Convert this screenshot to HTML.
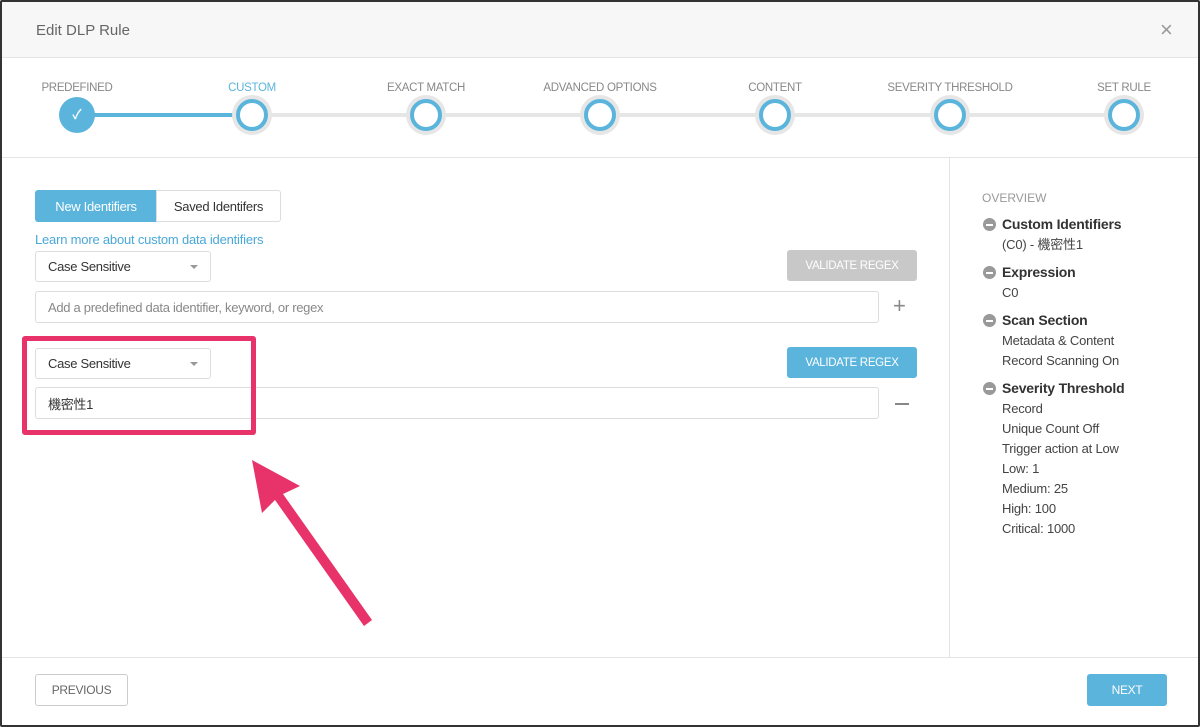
<!DOCTYPE html>
<html><head><meta charset="utf-8"><style>
*{box-sizing:border-box;margin:0;padding:0}
body{width:1200px;height:727px;background:#fff;font-family:"Liberation Sans","Noto Sans CJK JP",sans-serif;position:relative;overflow:hidden;color:#333}
.frame{position:absolute;left:0;top:0;width:1200px;height:727px;border:2px solid #333;border-radius:2px}
.hdr{position:absolute;left:2px;top:2px;width:1196px;height:56px;background:#f7f7f7;border-bottom:1px solid #e4e4e4}
.abs{position:absolute}
.lbl{position:absolute;top:82px;font-size:11.5px;color:#888;transform:translateX(-50%);white-space:nowrap;letter-spacing:-0.3px}
.circ{position:absolute;top:99px;width:32px;height:32px;border-radius:50%;background:#fff;border:4px solid #5ab4dc;box-shadow:0 0 0 4px #e6e6e6;transform:translateX(-50%)}
.inp{position:absolute;border:1px solid #ddd;border-radius:3px;background:#fff;font-size:13px;padding-left:12px;display:flex;align-items:center;letter-spacing:-0.3px}
.caret{position:absolute;right:12px;top:13px;border-left:4px solid transparent;border-right:4px solid transparent;border-top:4px solid #999}
.btn{position:absolute;border-radius:3px;color:#fff;font-size:12px;display:flex;align-items:center;justify-content:center;letter-spacing:-0.3px}
.ov{position:absolute;left:1002px;font-size:13px;color:#444;line-height:20px;letter-spacing:-0.2px}
.ov b{color:#333;font-size:14px}
.dot{position:absolute;left:983px;width:13px;height:13px;border-radius:50%;background:#999}
.dot:after{content:"";position:absolute;left:3px;top:5.5px;width:7px;height:2px;background:#fff}
</style></head><body>
<div class="hdr"></div>
<div class="abs" style="left:36px;top:22px;font-size:15px;color:#666">Edit DLP Rule</div>
<div class="abs" style="left:1160px;top:17px;font-size:22px;color:#999;font-weight:300">×</div>
<div class="abs" style="left:77px;top:113px;width:175px;height:4px;background:#5ab4dc"></div>
<div class="abs" style="left:252px;top:113px;width:872px;height:4px;background:#e6e6e6"></div>
<div class="lbl" style="left:77px">PREDEFINED</div>
<div class="lbl" style="left:252px;color:#5ab4dc">CUSTOM</div>
<div class="lbl" style="left:426px">EXACT MATCH</div>
<div class="lbl" style="left:600px">ADVANCED OPTIONS</div>
<div class="lbl" style="left:775px">CONTENT</div>
<div class="lbl" style="left:950px">SEVERITY THRESHOLD</div>
<div class="lbl" style="left:1124px">SET RULE</div>
<div class="abs" style="left:59px;top:97px;width:36px;height:36px;border-radius:50%;background:#5ab4dc;color:#fff;font-size:13px;text-align:center;line-height:36px;text-shadow:0 0 1px #fff">✓</div>
<div class="circ" style="left:252px"></div><div class="circ" style="left:426px"></div><div class="circ" style="left:600px"></div><div class="circ" style="left:775px"></div><div class="circ" style="left:950px"></div><div class="circ" style="left:1124px"></div>
<div class="abs" style="left:2px;top:157px;width:1196px;height:1px;background:#e4e4e4"></div>
<div class="abs" style="left:949px;top:157px;width:1px;height:500px;background:#e4e4e4"></div>
<div class="abs" style="left:2px;top:657px;width:1196px;height:1px;background:#e4e4e4"></div>

<div class="btn" style="left:35px;top:190px;width:122px;height:32px;background:#5ab4dc;border-radius:3px 0 0 3px;font-size:13px">New Identifiers</div>
<div class="btn" style="left:156px;top:190px;width:125px;height:32px;border:1px solid #ddd;color:#333;border-radius:0 3px 3px 0;font-size:13px">Saved Identifers</div>
<div class="abs" style="left:35px;top:232px;font-size:13px;color:#4aa8d8;letter-spacing:-0.2px">Learn more about custom data identifiers</div>
<div class="inp" style="left:35px;top:251px;width:176px;height:31px">Case Sensitive<span class="caret"></span></div>
<div class="btn" style="left:787px;top:250px;width:130px;height:31px;background:#c8c8c8;font-size:11.5px">VALIDATE REGEX</div>
<div class="inp" style="left:35px;top:291px;width:844px;height:32px;color:#888">Add a predefined data identifier, keyword, or regex</div>
<div class="abs" style="left:893px;top:293px;font-size:22px;color:#888;font-weight:300">+</div>
<div class="inp" style="left:35px;top:348px;width:176px;height:31px">Case Sensitive<span class="caret"></span></div>
<div class="btn" style="left:787px;top:347px;width:130px;height:31px;background:#5ab4dc;font-size:11.5px">VALIDATE REGEX</div>
<div class="inp" style="left:35px;top:387px;width:844px;height:32px">機密性1</div>
<div class="abs" style="left:895px;top:403px;width:14px;height:1.5px;background:#888"></div>
<div class="abs" style="left:22px;top:336px;width:234px;height:99px;border:5px solid #e8336a;border-radius:3px"></div>
<svg class="abs" style="left:0;top:0" width="1200" height="727"><polygon points="252,460 300,486 283,494 372,620 364,626 275,500 262,513" fill="#e8336a"/></svg>

<div class="abs" style="left:982px;top:191px;font-size:12px;color:#999">OVERVIEW</div>
<div class="dot" style="top:218px"></div><div class="ov" style="top:214px"><b>Custom Identifiers</b><br>(C0) - 機密性1</div>
<div class="dot" style="top:266px"></div><div class="ov" style="top:262px"><b>Expression</b><br>C0</div>
<div class="dot" style="top:314px"></div><div class="ov" style="top:310px"><b>Scan Section</b><br>Metadata &amp; Content<br>Record Scanning On</div>
<div class="dot" style="top:382px"></div><div class="ov" style="top:378px"><b>Severity Threshold</b><br>Record<br>Unique Count Off<br>Trigger action at Low<br>Low: 1<br>Medium: 25<br>High: 100<br>Critical: 1000</div>

<div class="btn" style="left:35px;top:674px;width:93px;height:32px;border:1px solid #ccc;color:#666">PREVIOUS</div>
<div class="btn" style="left:1087px;top:674px;width:80px;height:32px;background:#5ab4dc">NEXT</div>
<div class="frame"></div>
</body></html>
